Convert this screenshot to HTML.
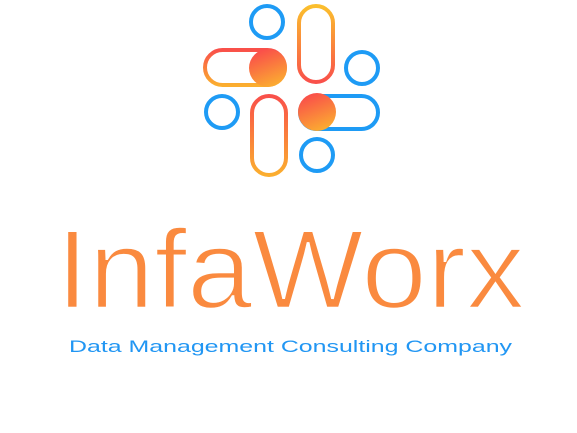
<!DOCTYPE html>
<html><head><style>html,body{margin:0;padding:0;background:#fff;width:577px;height:433px;overflow:hidden}</style></head>
<body>
<svg width="577" height="433" viewBox="0 0 577 433" xmlns="http://www.w3.org/2000/svg">
<defs>
<linearGradient id="gv" x1="0" y1="0" x2="0" y2="1"><stop offset="0" stop-color="#fbbf2d"/><stop offset="1" stop-color="#f9504a"/></linearGradient>
<linearGradient id="gv2" x1="0" y1="0" x2="0" y2="1"><stop offset="0" stop-color="#f9504a"/><stop offset="1" stop-color="#fbae2f"/></linearGradient>
<linearGradient id="gh" x1="0" y1="0" x2="0" y2="1"><stop offset="0" stop-color="#f9504a"/><stop offset="1" stop-color="#fbae2f"/></linearGradient>
<linearGradient id="gf" x1="0.3" y1="0" x2="0.7" y2="1"><stop offset="0" stop-color="#fa4b4b"/><stop offset="1" stop-color="#fbb030"/></linearGradient>
</defs>
<g fill="none" stroke-width="4">
<circle cx="267" cy="22" r="16" stroke="#1e9bf5"/>
<rect x="299" y="6" width="34" height="76" rx="17" stroke="url(#gv)"/>
<circle cx="362" cy="68" r="16" stroke="#1e9bf5"/>
<rect x="205" y="50" width="80" height="35" rx="17.5" stroke="url(#gh)"/>
<circle cx="222" cy="112" r="16" stroke="#1e9bf5"/>
<rect x="252" y="96" width="34" height="79" rx="17" stroke="url(#gv2)"/>
<rect x="300" y="96" width="78" height="33" rx="16.5" stroke="#1e9bf5"/>
<circle cx="317" cy="155" r="16" stroke="#1e9bf5"/>
</g>
<circle cx="268" cy="68" r="19" fill="url(#gf)"/>
<circle cx="317" cy="112" r="19" fill="url(#gf)"/>
<text x="56" y="308" font-family="Liberation Sans, sans-serif" font-size="112" fill="#fa8a3f" stroke="#fff" stroke-width="2.5" textLength="469" lengthAdjust="spacingAndGlyphs">InfaWorx</text>
<text x="69" y="352" font-family="Liberation Sans, sans-serif" font-size="17" fill="#2196f3" textLength="443" lengthAdjust="spacingAndGlyphs">Data Management Consulting Company</text>
</svg>
</body></html>
